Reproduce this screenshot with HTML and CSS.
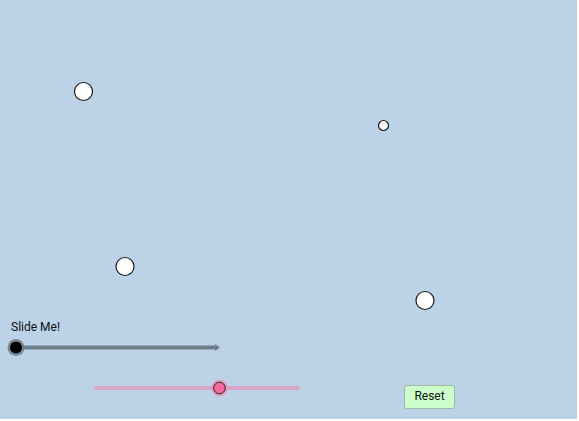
FILE: index.html
```html
<!DOCTYPE html>
<html>
<head>
<meta charset="utf-8">
<link rel="stylesheet" href="styles.css">
</head>
<body>
<div class="applet">
  <svg class="canvas" width="577" height="419" viewBox="0 0 577 419">
    <g class="pt">
      <circle cx="83.5" cy="91.5" r="9"/>
      <circle cx="383.5" cy="125.5" r="5"/>
      <circle cx="125" cy="266.5" r="9"/>
      <circle cx="425" cy="300.5" r="9"/>
    </g>
    <line x1="16" y1="347.5" x2="216" y2="347.5" stroke="#6f7f89" stroke-width="4"/>
    <polygon points="215,344 220,347.5 215,351" fill="#6f7f89"/>
    <circle cx="16" cy="347.5" r="8.5" fill="#6f7f89" opacity="0.9"/>
    <circle cx="16" cy="347.5" r="6" fill="#000"/>
    <line x1="96" y1="388" x2="297" y2="388" stroke="#d9a6c7" stroke-width="4" stroke-linecap="round"/>
    <polygon points="296,384.5 301,388 296,391.5" fill="#d9a6c7"/>
    <circle cx="219.5" cy="388" r="8.5" fill="#dca1c4"/>
    <circle cx="219.5" cy="388" r="5.8" fill="#f46a9a" stroke="#222" stroke-width="1"/>
  </svg>
  <div class="label">Slide Me!</div>
  <button class="reset">Reset</button>
</div>
</body>
</html>
```
FILE: styles.css
```css
html, body {
  margin: 0;
  padding: 0;
  background: #ffffff;
}
.applet {
  position: relative;
  width: 577px;
  height: 419px;
  background: #bcd3e7;
  overflow: hidden;
  font-family: Roboto, "Liberation Sans", sans-serif;
}
.canvas {
  display: block;
}
.pt circle {
  fill: #ffffff;
  stroke: #1a1a1a;
  stroke-width: 1.2;
}
.label {
  position: absolute;
  left: 11px;
  top: 320px;
  font-size: 12px;
  color: #111;
  line-height: 14px;
}
.reset {
  position: absolute;
  left: 404px;
  top: 385px;
  width: 51px;
  height: 24px;
  padding: 0 0 2px 0;
  margin: 0;
  background: #ccffcc;
  border: 1px solid #9fb8a0;
  border-radius: 3px;
  font-family: Roboto, "Liberation Sans", sans-serif;
  font-size: 12px;
  color: #111;
  line-height: 18px;
}
```
